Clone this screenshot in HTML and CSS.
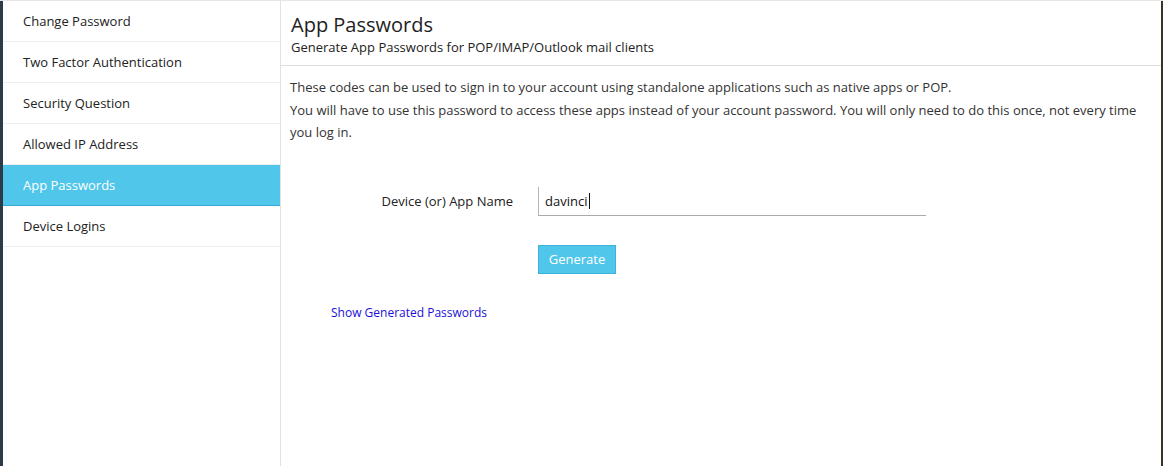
FILE: index.html
```html
<!DOCTYPE html>
<html>
<head>
<meta charset="utf-8">
<link rel="stylesheet" href="styles.css">
</head>
<body>
<div class="page">
  <div class="edge-left"></div>
  <nav class="sidebar">
    <div class="nav-item">Change Password</div>
    <div class="nav-item">Two Factor Authentication</div>
    <div class="nav-item">Security Question</div>
    <div class="nav-item">Allowed IP Address</div>
    <div class="nav-item active">App Passwords</div>
    <div class="nav-item">Device Logins</div>
  </nav>
  <main class="main">
    <header class="header">
      <h1 class="title">App Passwords</h1>
      <div class="subtitle">Generate App Passwords for POP/IMAP/Outlook mail clients</div>
    </header>
    <section class="content">
      <p class="desc">These codes can be used to sign in to your account using standalone applications such as native apps or POP.<br>You will have to use this password to access these apps instead of your account password. You will only need to do this once, not every time you log in.</p>
      <div class="form">
        <label class="label" for="app">Device (or) App Name</label>
        <div class="field"><input id="app" class="input" type="text" value="davinci"><span class="caret"></span></div>
        <div></div>
        <div><button class="btn">Generate</button></div>
      </div>
      <a class="link" href="#">Show Generated Passwords</a>
    </section>
  </main>
  <div class="edge-right"></div>
</div>
</body>
</html>
```
FILE: styles.css
```css
html, body {
  margin: 0;
  padding: 0;
  height: 100%;
  background: #fff;
}
body {
  font-family: "Open Sans", "Liberation Sans", sans-serif;
  font-size: 13px;
  color: #222;
}
.page {
  display: flex;
  height: 466px;
  box-sizing: border-box;
  border-top: 1px solid #e6e6e6;
}
.edge-left {
  width: 3px;
  background: #2d3a48;
  flex: none;
}
.edge-right {
  width: 2px;
  background: #3b3327;
  flex: none;
}
.sidebar {
  width: 277px;
  flex: none;
  border-right: 1px solid #e2e2e2;
}
.nav-item {
  height: 40px;
  line-height: 40px;
  padding-left: 20px;
  border-bottom: 1px solid #efefef;
  color: #222;
}
.nav-item.active {
  background: #50c6ea;
  color: #fff;
  border-bottom: 1px solid #35a9d4;
}
.main {
  flex: 1;
  display: flex;
  flex-direction: column;
}
.header {
  padding: 11px 10px 9px 10px;
  border-bottom: 1px solid #dedede;
}
.title {
  margin: 0;
  font-size: 20px;
  font-weight: 400;
  line-height: 26px;
  color: #222;
}
.subtitle {
  line-height: 18px;
  color: #222;
}
.content {
  padding: 10px 10px 0 9px;
}
.desc {
  margin: 0;
  line-height: 22.5px;
  color: #333;
}
.form {
  display: grid;
  grid-template-columns: 223px 388px;
  column-gap: 25px;
  row-gap: 29px;
  margin-top: 43px;
  align-items: center;
}
.label {
  text-align: right;
  color: #222;
}
.field {
  position: relative;
}
.input {
  display: block;
  box-sizing: border-box;
  width: 388px;
  height: 29px;
  border: none;
  border-left: 1px solid #b5b5b5;
  border-bottom: 1px solid #aaa;
  padding: 0 0 0 6px;
  font-family: "Open Sans", "Liberation Sans", sans-serif;
  font-size: 13px;
  color: #111;
  outline: none;
  background: #fff;
}
.caret {
  position: absolute;
  left: 51px;
  top: 6px;
  width: 1px;
  height: 16px;
  background: #111;
}
.btn {
  display: block;
  width: 78px;
  height: 29px;
  background: #50c6ea;
  border: 1px solid #3cb3dc;
  color: #fff;
  font-family: "Open Sans", "Liberation Sans", sans-serif;
  font-size: 13px;
  padding: 0;
  cursor: pointer;
}
.link {
  display: inline-block;
  margin-top: 30px;
  margin-left: 41px;
  color: #1a10d8;
  text-decoration: none;
  font-size: 12px;
}
```
